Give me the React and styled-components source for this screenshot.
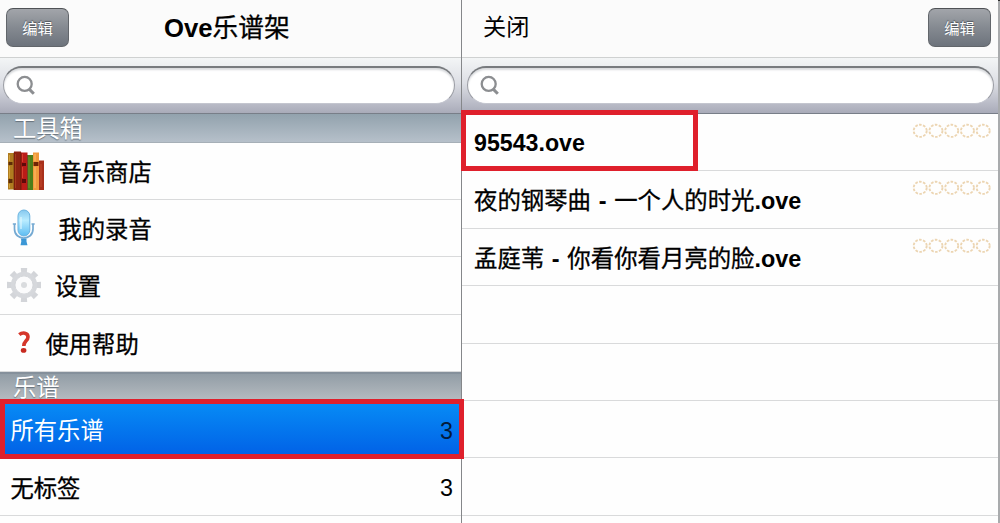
import React from 'react';
import styled, { createGlobalStyle } from 'styled-components';

const Global = createGlobalStyle`
  * { box-sizing: border-box; }
  body {
    margin: 0;
    background: #fff;
    color: #000;
    font-family: "Liberation Sans", "Noto Sans CJK SC", sans-serif;
  }
`;

const Screen = styled.div`
  position: relative;
  display: flex;
  width: 1000px;
  height: 523px;
  overflow: hidden;
  background: #fefefe;
`;

const Pane = styled.section`
  display: flex;
  flex-direction: column;
  flex: none;
  width: ${(p) => p.$width}px;
  height: 523px;
`;

const Divider = styled.div`
  flex: none;
  width: ${(p) => p.$width}px;
  background: ${(p) => p.$color};
  border-top: ${(p) => (p.$capped ? '1px solid #2c2c2c' : '0')};
`;

const NavBar = styled.header`
  display: flex;
  align-items: flex-start;
  justify-content: ${(p) => (p.$spread ? 'space-between' : 'flex-start')};
  flex: none;
  height: 58px;
  padding: 8px 7px 0 ${(p) => (p.$spread ? 21 : 6)}px;
  background: #fbfbfb;
  border-bottom: 1px solid #cfd1d1;
`;

const EditButton = styled.button`
  width: 63px;
  height: 39px;
  padding: 0 0 1px;
  border: 1px solid #62666b;
  border-top-color: #4f5256;
  border-radius: 7px;
  background: linear-gradient(#a2a5aa, #858a91 50%, #6d737c);
  color: #fff;
  font: 15.3px/34px "Noto Sans CJK SC", sans-serif;
  text-shadow: 0 -1px 1px #50555c;
`;

const Title = styled.h1`
  margin: 0 0 0 95px;
  font-size: 25.7px;
  line-height: 35px;
  font-weight: 700;
  white-space: nowrap;
`;

const Han = styled.span`
  font-family: "Noto Sans CJK SC", sans-serif;
  font-weight: 400;
  -webkit-text-stroke: ${(p) => p.$stroke ?? 0.3}px currentColor;
`;

const CloseLabel = styled.span`
  font: 23.2px/35px "Noto Sans CJK SC", sans-serif;
`;

const SearchBar = styled.div`
  flex: none;
  height: 56px;
  padding: 8px ${(p) => p.$right}px 0 ${(p) => p.$left}px;
  background: linear-gradient(#f3f5f6, #dddfe5 45%, #a9abb9);
  border-bottom: 1px solid #787e88;
`;

const SearchField = styled.div`
  display: flex;
  align-items: center;
  height: 38px;
  padding-left: 12px;
  border: 1px solid #9a9ca3;
  border-top: 2px solid #777a7e;
  border-bottom-color: #c4c6cf;
  border-radius: 19px;
  background: #fff;
  box-shadow: inset 0 2px 2px #d8dadd;
`;

const SectionHeader = styled.h2`
  flex: none;
  height: ${(p) => p.$height}px;
  margin: 0;
  padding-left: 13px;
  border-top: ${(p) => (p.$rule ? '2px solid #85909b' : '0')};
  border-bottom: 1px solid #a6afb7;
  background: ${(p) =>
    p.$rule ? 'linear-gradient(#929da6, #b5bbc0)' : 'linear-gradient(#92a2ad, #b6c0ca)'};
  color: #fff;
  font: 23.3px/${(p) => (p.$rule ? 25 : 27)}px "Noto Sans CJK SC", sans-serif;
  text-shadow: 0 1px 1px #66717b;
`;

const Row = styled.div`
  display: flex;
  align-items: center;
  flex: none;
  height: ${(p) => p.$height ?? 57.4}px;
  padding: 0 8px 0 ${(p) => p.$indent ?? 10.5}px;
  border-bottom: 1px solid #d9dadb;
  font-size: 23.3px;
  line-height: 30px;
  ${(p) =>
    p.$selected &&
    'background: linear-gradient(#078df6, #0160e6); color: #fff;'}
`;

const RowIcon = styled.span`
  display: flex;
  align-items: center;
  flex: none;
  width: ${(p) => p.$width}px;
`;

const Count = styled.span`
  margin-left: auto;
  padding-top: 3px;
  color: ${(p) => (p.$dim ? '#031b3b' : '#000')};
`;

const FileRow = styled(Row)`
  justify-content: space-between;
  align-items: flex-start;
  padding: 0 7px 0 12px;
`;

const FileName = styled.span`
  padding-top: ${(p) => (p.$latin ? 14 : 13)}px;
  font-size: ${(p) => (p.$latin ? 23.2 : 23.4)}px;
  font-weight: 700;
  word-spacing: 1.2px;
  white-space: nowrap;
`;

const Stars = styled.span`
  display: flex;
  padding-top: 8px;
`;

const Mark = styled.div`
  position: absolute;
  left: ${(p) => p.$x}px;
  top: ${(p) => p.$y}px;
  width: ${(p) => p.$w}px;
  height: ${(p) => p.$h}px;
  border: 5px solid #df202c;
`;

const Magnifier = () => (
  <svg width="20" height="21" viewBox="0 0 20 21" fill="none" stroke="#8c8e91">
    <circle cx="8.7" cy="8.9" r="7" strokeWidth="2.3" />
    <path d="M13.2 14.1l4.6 4.6" strokeWidth="3" />
  </svg>
);

const Books = () => (
  <svg width="38" height="40" viewBox="0 0 38 40">
    <path d="M1 2h6v36.500H1z" fill="#b07c20" />
    <path d="M1.500 11h4v3h-4zM1.500 28h4v4h-4z" fill="#5e2c06" />
    <path d="M2.500 4v6M2.500 15v12M2.500 33v4" stroke="#cfa03a" />
    <path d="M7 .5h7V39H7z" fill="#8c2310" />
    <path d="M8.500 3v34" stroke="#a33a1b" />
    <path d="M14 1.500h6.500V39H14z" fill="#bb1c18" />
    <path d="M15 12h4v3h-4zM15 28h4v4h-4z" fill="#5e0a0a" />
    <path d="M15.500 3v8M15.500 16v11" stroke="#d6402c" />
    <path d="M20.500 4H26v35h-5.500z" fill="#4c7d19" />
    <path d="M22 6v31" stroke="#6c9a2b" />
    <path d="M26 1.500h6V39h-6z" fill="#f09a3c" />
    <path d="M26.500 11h5v4h-5z" fill="#6e2305" />
    <path d="M28 3v7M28 16v21" stroke="#ffbe68" />
    <path d="M32 9.500h5V39h-5z" fill="#a8301b" />
    <path d="M34 13v23" stroke="#c4492a" />
    <path d="M7 1.500V39M14 1.500V39M20.500 4v35" stroke="#571708" strokeWidth=".6" />
  </svg>
);

const Microphone = () => (
  <svg width="24" height="38" viewBox="0 0 24 38">
    <defs>
      <linearGradient id="mic" x2="0" y2="1">
        <stop stopColor="#86c8ee" />
        <stop offset=".4" stopColor="#b9ecff" />
        <stop offset="1" stopColor="#5cbcf2" />
      </linearGradient>
    </defs>
    <path d="M2.500 15v5c0 12 18.500 12 18.500 0v-5" fill="none" stroke="#74a9d2" strokeWidth="1.700" />
    <path d="M.8 15h3.200M19.500 15h3.200" stroke="#74a9d2" strokeWidth="1.700" />
    <path d="M9 29.500h5.500v3l1 3.700H8.500l.8-3.700z" fill="#3b97d6" />
    <rect x="6" y="1" width="11.800" height="26" rx="5.900" fill="url(#mic)" stroke="#6ab3e0" />
    <path d="M9 8v12" stroke="#e7faff" strokeWidth="1.500" opacity=".7" />
  </svg>
);

const Gear = () => (
  <svg width="36" height="36" viewBox="-18 -18 36 36">
    <g fill="#d3d5d9">
      {[0, 45, 90, 135, 180, 225, 270, 315].map((a) => (
        <path key={a} d="M-2.700 -11l-.5-6h6.400l-.5 6z" transform={`rotate(${a})`} />
      ))}
    </g>
    <circle r="11.200" fill="#fbfbfc" stroke="#d6d8dc" strokeWidth="4" />
    <circle r="9" stroke="#c9ccd0" strokeWidth=".7" fill="none" />
    <circle r="3" fill="#d9dbde" />
  </svg>
);

const Question = () => (
  <svg width="13" height="23" viewBox="0 0 13 23">
    <path
      d="M1.300 3.700C4.500 1 10 1.500 10 6C10 10 5.800 9.800 5.800 15"
      fill="none"
      stroke="#d5362a"
      strokeWidth="3.600"
    />
    <ellipse cx="5.600" cy="19.400" rx="2.800" ry="2.400" fill="#c72a20" />
  </svg>
);

const Rating = () => (
  <Stars>
    <svg width="79" height="18" viewBox="0 0 79 18" fill="none">
      {[0, 1, 2, 3, 4].map((i) => (
        <ellipse
          key={i}
          cx={8.2 + i * 15.75}
          cy="8.800"
          rx="6.500"
          ry="6.100"
          stroke="#ecd5b2"
          strokeWidth="1.900"
          strokeDasharray="2.600 1.370"
        />
      ))}
    </svg>
  </Stars>
);

const Search = ({ left, right }) => (
  <SearchBar $left={left} $right={right}>
    <SearchField>
      <Magnifier />
    </SearchField>
  </SearchBar>
);

const tools = [
  { label: '音乐商店', Icon: Books, indent: 6.5, width: 52 },
  { label: '我的录音', Icon: Microphone, indent: 12, width: 46.5 },
  { label: '设置', Icon: Gear, indent: 6, width: 48.5 },
  { label: '使用帮助', Icon: Question, indent: 18, width: 27.5 },
];

export default function App() {
  return (
    <Screen>
      <Global />
      <Pane $width={461}>
        <NavBar>
          <EditButton>编辑</EditButton>
          <Title>
            Ove<Han>乐谱架</Han>
          </Title>
        </NavBar>
        <Search left={3} right={6} />
        <SectionHeader $height={29}>工具箱</SectionHeader>
        {tools.map(({ label, Icon, indent, width }) => (
          <Row key={label} $indent={indent} $height={57.2}>
            <RowIcon $width={width}>
              <Icon />
            </RowIcon>
            <Han>{label}</Han>
          </Row>
        ))}
        <SectionHeader $height={29.2} $rule>
          乐谱
        </SectionHeader>
        <Row $selected>
          <Han $stroke={0}>所有乐谱</Han>
          <Count $dim>3</Count>
        </Row>
        <Row>
          <Han>无标签</Han>
          <Count>3</Count>
        </Row>
      </Pane>
      <Divider $width={1} $color="#85878a" />
      <Pane $width={536}>
        <NavBar $spread>
          <CloseLabel>关闭</CloseLabel>
          <EditButton>编辑</EditButton>
        </NavBar>
        <Search left={5} right={4} />
        <FileRow>
          <FileName $latin>95543.ove</FileName>
          <Rating />
        </FileRow>
        <FileRow>
          <FileName>
            <Han>夜的钢琴曲</Han> - <Han>一个人的时光</Han>.ove
          </FileName>
          <Rating />
        </FileRow>
        <FileRow>
          <FileName>
            <Han>孟庭苇</Han> - <Han>你看你看月亮的脸</Han>.ove
          </FileName>
          <Rating />
        </FileRow>
        <FileRow />
        <FileRow />
        <FileRow />
        <FileRow />
      </Pane>
      <Divider $width={2} $color="#a9abad" $capped />
      <Mark $x={461} $y={110} $w={237} $h={61} />
      <Mark $x={0} $y={399} $w={464} $h={60} />
    </Screen>
  );
}
